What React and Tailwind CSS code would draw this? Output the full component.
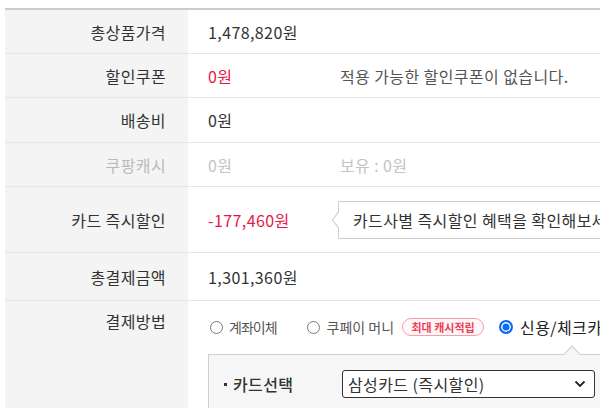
const font = { fontFamily: '"Noto Sans CJK KR", "Noto Sans", sans-serif' };

const Row = ({ label, h, muted, top, children }) => (
  <div className={`flex border-b border-[#e6e6e6] ${h}`}>
    <div
      className={`w-[183px] shrink-0 bg-[#f4f4f4] pr-[22px] flex justify-end ${
        top ? "items-start pt-[12px]" : "items-center"
      } ${muted ? "text-[#bbbbbb]" : "text-[#333]"}`}
    >
      {label}
    </div>
    <div
      className={`flex-1 min-w-0 pl-[20px] flex overflow-hidden ${
        top ? "flex-col" : "items-center"
      }`}
    >
      {children}
    </div>
  </div>
);

const Radio = ({ checked }) =>
  checked ? (
    <span className="w-[14px] h-[14px] rounded-full border-[2px] border-[#0a6cf5] bg-[#0a6cf5] shadow-[inset_0_0_0_1.5px_#fff] inline-block shrink-0" />
  ) : (
    <span className="w-[13px] h-[13px] rounded-full border border-[#777] bg-white inline-block shrink-0" />
  );

export default function App() {
  return (
    <div
      className="w-[600px] h-[408px] overflow-hidden bg-white pt-[8px] pl-[5px] text-[16px] tracking-[0.4px] leading-none"
      style={font}
    >
      <div className="border-t-2 border-[#cccccc]">
        <Row label="총상품가격" h="h-[44px]">
          <span className="text-[#333]">1,478,820원</span>
        </Row>
        <Row label="할인쿠폰" h="h-[44px]">
          <span className="text-[#e3194a] w-[132px] shrink-0">0원</span>
          <span className="text-[#555] whitespace-nowrap">적용 가능한 할인쿠폰이 없습니다.</span>
        </Row>
        <Row label="배송비" h="h-[45px]">
          <span className="text-[#333]">0원</span>
        </Row>
        <Row label="쿠팡캐시" h="h-[44px]" muted>
          <span className="text-[#c4c4c4] w-[132px] shrink-0">0원</span>
          <span className="text-[#c4c4c4]">보유 : 0원</span>
        </Row>
        <Row label="카드 즉시할인" h="h-[66px]">
          <span className="text-[#e3194a] w-[122px] shrink-0 whitespace-nowrap">-177,460원</span>
          <div className="relative ml-[8px] h-[38px] w-[300px] shrink-0 border border-[#cfcfcf] bg-white flex items-center pl-[14px] whitespace-nowrap text-[#333]">
            <span className="absolute left-[-6px] top-[13px] w-[10px] h-[10px] bg-white border-l border-b border-[#cfcfcf] rotate-45 skew-x-[8deg] skew-y-[8deg]" />
            카드사별 즉시할인 혜택을 확인해보세요
          </div>
        </Row>
        <Row label="총결제금액" h="h-[48px]">
          <span className="text-[#333]">1,301,360원</span>
        </Row>
        <Row label="결제방법" h="h-[120px]" top>
          <div className="flex items-center h-[36px] pt-[16px] whitespace-nowrap tracking-normal">
            <div className="flex items-center gap-[6px] pl-[2px] shrink-0">
              <Radio />
              <span className="text-[#555] text-[14px] tracking-[-1px]">계좌이체</span>
            </div>
            <div className="flex items-center gap-[7px] ml-[30px] shrink-0">
              <Radio />
              <span className="text-[#555] text-[14px]">쿠페이 머니</span>
            </div>
            <span className="ml-[8px] h-[18px] w-[82px] shrink-0 justify-center rounded-full border-[1.5px] border-[#f3a1a9] bg-[#fff7f8] text-[#ef3e55] text-[11px] font-bold flex items-center">
              최대 캐시적립
            </span>
            <div className="flex items-center gap-[7px] ml-[15px] shrink-0">
              <Radio checked />
              <span className="text-[#222] text-[16px] tracking-[0.4px]">신용/체크카드</span>
            </div>
          </div>
          <div className="relative mt-[17px] h-[60px] w-[400px] shrink-0 border border-[#cfcfcf] bg-[#f6f6f6] flex items-center pl-[15px]">
            <span className="absolute left-[357px] top-[-7px] w-[12px] h-[12px] bg-[#f6f6f6] border-l border-t border-[#cfcfcf] rotate-45" />
            <span className="w-[3px] h-[3px] bg-[#333] mr-[6px] shrink-0" />
            <span className="text-[#333] w-[109px] shrink-0 font-medium">카드선택</span>
            <div className="h-[28px] w-[253px] shrink-0 border border-[#333] rounded-[3px] bg-white flex items-center pl-[5px] pr-[8px] justify-between text-[#333]">
              <span>삼성카드 (즉시할인)</span>
              <svg width="12" height="8" viewBox="0 0 12 8" fill="none">
                <path d="M1.5 1.5L6 6L10.5 1.5" stroke="#222" strokeWidth="1.8" />
              </svg>
            </div>
          </div>
        </Row>
      </div>
    </div>
  );
}
